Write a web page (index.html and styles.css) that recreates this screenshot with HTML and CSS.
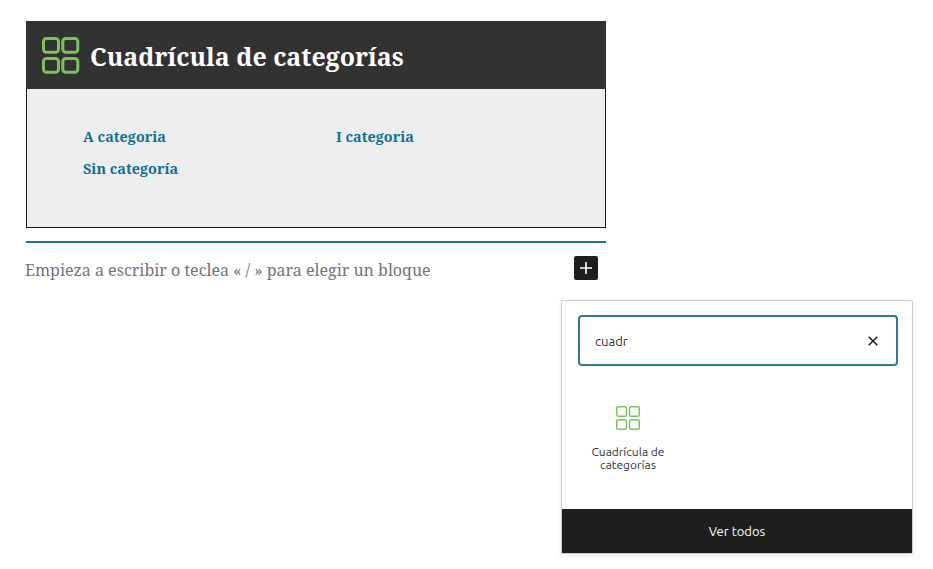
FILE: index.html
```html
<!DOCTYPE html>
<html lang="es">
<head>
<meta charset="utf-8">
<title>Cuadrícula de categorías</title>
<link rel="stylesheet" href="styles.css">
</head>
<body>
<main class="editor">
  <section class="block">
    <header class="block-head">
      <svg class="grid-icon-lg" viewBox="0 0 38 37" width="38" height="37" aria-hidden="true">
        <rect x="1.5" y="1.5" width="15" height="13.8" rx="3"/>
        <rect x="20.8" y="1.5" width="15" height="13.8" rx="3"/>
        <rect x="1.5" y="21.5" width="15" height="13.8" rx="3"/>
        <rect x="20.8" y="21.5" width="15" height="13.8" rx="3"/>
      </svg>
      <h2 class="block-title">Cuadrícula de categorías</h2>
    </header>
    <ul class="cats">
      <li><a href="#">A categoria</a></li>
      <li><a href="#">I categoria</a></li>
      <li><a href="#">Sin categoría</a></li>
    </ul>
  </section>
  <div class="rule"></div>
  <div class="prompt-row">
    <p class="prompt">Empieza a escribir o teclea « / » para elegir un bloque</p>
    <button class="plus" aria-label="Añadir bloque">
      <svg viewBox="0 0 24 24" width="24" height="24"><path d="M18 11.2h-5.2V6h-1.6v5.2H6v1.6h5.2V18h1.6v-5.2H18z"/></svg>
    </button>
  </div>
</main>
<aside class="popover">
  <div class="pop-body">
    <div class="search">
      <span class="search-text">cuadr</span>
      <svg class="clear" viewBox="0 0 24 24" width="24" height="24"><path d="M12 13.06l3.71 3.71 1.06-1.06L13.06 12l3.71-3.71-1.06-1.06L12 10.94 8.29 7.23 7.23 8.29 10.94 12l-3.71 3.71 1.06 1.06z"/></svg>
    </div>
    <div class="result">
      <svg class="grid-icon-sm" viewBox="0 0 24 24" width="24" height="24" aria-hidden="true">
        <rect x="0.75" y="0.75" width="9.75" height="9.5" rx="1.6"/>
        <rect x="13.5" y="0.75" width="9.75" height="9.5" rx="1.6"/>
        <rect x="0.75" y="13.75" width="9.75" height="9.5" rx="1.6"/>
        <rect x="13.5" y="13.75" width="9.75" height="9.5" rx="1.6"/>
      </svg>
      <span class="result-label">Cuadrícula de categorías</span>
    </div>
  </div>
  <button class="view-all">Ver todos</button>
</aside>
</body>
</html>
```

FILE: styles.css
```css
* { box-sizing: border-box; }
html, body { margin: 0; height: 100%; background: #fff; overflow: hidden; }
body { position: relative; font-family: "Noto Serif", "DejaVu Serif", serif; }

.editor { width: 580px; margin-left: 26px; padding-top: 21px; }

.block { border: 1px solid #1e1e1e; background: #eee; height: 207px; }
.block-head {
  display: flex; align-items: center; gap: 10px;
  padding: 1px 0 0 16px; margin: -1px -1px 0;
  height: 68px; background: #323232;
}
.grid-icon-lg { flex: none; }
.grid-icon-lg rect { fill: none; stroke: #7bc25d; stroke-width: 3; }
.block-title { margin: 0; color: #fff; font-size: 24.95px; line-height: 34px; font-weight: 700; }

.cats {
  list-style: none; margin: 0; padding: 38px 0 0 56px;
  display: grid; grid-template-columns: 253px 1fr; row-gap: 12px;
}
.cats a { color: #0f7096; font-size: 14.4px; line-height: 20px; font-weight: 700; text-decoration: none; display: block; }

.rule { height: 2px; background: #1d7491; margin-top: 13px; }

.prompt-row { display: flex; justify-content: space-between; align-items: flex-start; padding: 13px 8px 0 0; margin-left: -1px; }
.prompt { margin: 0; color: #757575; font-size: 16px; line-height: 28px; white-space: nowrap; }
.plus {
  width: 24px; height: 24px; padding: 0; border: 0; border-radius: 2px; background: #1e1e1e;
  display: block;
}
.plus svg { display: block; fill: #fff; }

.popover {
  position: absolute; left: 561px; top: 300px; width: 352px; height: 254px;
  display: flex; flex-direction: column;
  background: #fff; border: 1px solid #ccc; border-radius: 2px;
  box-shadow: 0 2px 6px rgba(0,0,0,.08);
  font-family: "Ubuntu", "Noto Sans", sans-serif; color: #1e1e1e;
}
.pop-body { flex: 1; padding: 14px 13px 0 16px; }
.search {
  display: flex; align-items: center; justify-content: space-between;
  height: 51px; padding: 0 11px 0 15px; width: 320px;
  border: 2px solid #2a7a98; border-radius: 4px;
}
.search-text { font-size: 13px; color: #333; }
.clear { fill: #1e1e1e; flex: none; }
.result { width: 100px; margin: 40px 0 0 0; display: flex; flex-direction: column; align-items: center; }
.grid-icon-sm rect { fill: none; stroke: #7bc25d; stroke-width: 1.5; }
.result-label { width: 90px; margin-top: 15px; font-size: 12px; line-height: 13px; text-align: center; color: #2f2f2f; }

.view-all {
  height: 44px; border: 0; background: #1e1e1e; color: #fff; flex: none; padding: 0;
  font-family: inherit; font-size: 13px;
}
```
